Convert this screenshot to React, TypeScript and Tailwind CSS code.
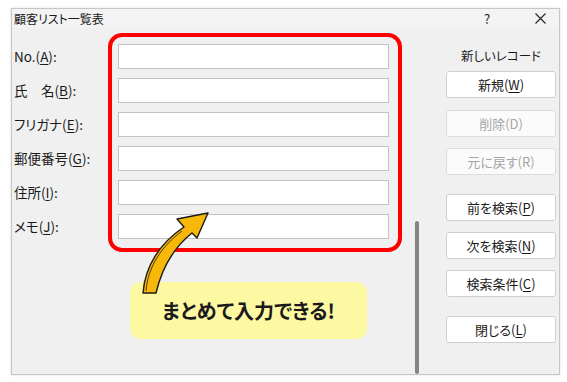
import React from "react";

const font = "[font-family:'Noto_Sans_CJK_JP','Noto_Sans',sans-serif] [font-feature-settings:'palt']";

function Acc({ pre, k, post = ")" }: { pre: string; k: string; post?: string }) {
  return (
    <span>
      {pre}(<span className="underline underline-offset-2">{k}</span>{post}
    </span>
  );
}

const labels: { pre: string; k: string }[] = [
  { pre: "No.", k: "A" },
  { pre: "氏\u3000名", k: "B" },
  { pre: "フリガナ", k: "E" },
  { pre: "郵便番号", k: "G" },
  { pre: "住所", k: "I" },
  { pre: "メモ", k: "J" },
];

function Btn({ children, disabled, className = "" }: { children: React.ReactNode; disabled?: boolean; className?: string }) {
  return (
    <div
      className={`h-[27px] w-[110px] rounded-[3px] border flex items-center justify-center text-[13px] ${
        disabled ? "border-[#dcdcdc] bg-[#fbfbfb] text-[#a6a6a6]" : "border-[#cfcfcf] bg-white text-[#1a1a1a]"
      } ${className}`}
    >
      {children}
    </div>
  );
}

export default function App() {
  return (
    <div className={`relative w-[567px] h-[382px] bg-white pt-[8px] pl-[11px] ${font}`}>
      <div className="w-[549px] h-[367px] border border-[#c6c6c6] bg-[#f0f0f0] shadow-[0_0_3px_rgba(0,0,0,0.12)] flex flex-col">
        {/* title bar */}
        <div className="h-[19px] flex items-center pl-[2px] text-[12px] text-[#1a1a1a] bg-[#f3f3f3]">
          <span>顧客リスト一覧表</span>
          <div className="ml-auto w-[20px] text-center text-[13px]">?</div>
          <div className="ml-[33px] w-[20px] mr-[9px] flex items-center justify-center">
            <svg width="11" height="11" viewBox="0 0 11 11">
              <path d="M0.5 0.5 L10.5 10.5 M10.5 0.5 L0.5 10.5" stroke="#222" strokeWidth="1.1" />
            </svg>
          </div>
        </div>
        {/* body */}
        <div className="flex items-start flex-1">
          <div className="w-[96px] pl-[2px] pt-[16px] flex flex-col gap-[9px] text-[13.5px] text-[#1a1a1a]">
            {labels.map((l) => (
              <div key={l.k} className="h-[25px] flex items-center">
                <Acc pre={l.pre} k={l.k} post="):" />
              </div>
            ))}
          </div>
          <div className="mt-[5px] w-[294px] border-4 border-[#ff0000] rounded-[14px] pl-[6px] pr-[9px] pt-[7px] pb-[9px] flex flex-col gap-[9px]">
            {labels.map((l) => (
              <div key={l.k} className="h-[25px] bg-white border border-[#c3c3c3]" />
            ))}
          </div>
          <div className="ml-[13px] mt-[193px] h-[153px] w-[4px] rounded-[2px] bg-[#858585]" />
          <div className="ml-[27px] w-[110px] flex flex-col">
            <div className="mt-[19px] h-[18px] text-[12.5px] text-center text-[#1a1a1a] leading-[18px]">新しいレコード</div>
            <Btn className="mt-[6px]"><Acc pre="新規" k="W" /></Btn>
            <Btn className="mt-[12px]" disabled>削除(D)</Btn>
            <Btn className="mt-[11px]" disabled>元に戻す(R)</Btn>
            <Btn className="mt-[19px]"><Acc pre="前を検索" k="P" /></Btn>
            <Btn className="mt-[11px]"><Acc pre="次を検索" k="N" /></Btn>
            <Btn className="mt-[11px]"><Acc pre="検索条件" k="C" /></Btn>
            <Btn className="mt-[19px]"><Acc pre="閉じる" k="L" /></Btn>
          </div>
        </div>
      </div>

      {/* callout */}
      <div className="absolute left-[130px] top-[282px] w-[237px] h-[57px] rounded-[10px] bg-[#fdf9a2] flex items-center justify-center text-[20px] font-bold text-[#1a1a1a] pt-[1px]">
        まとめて入力できる!
      </div>
      {/* arrow */}
      <svg className="absolute left-0 top-0 pointer-events-none" width="567" height="382" viewBox="0 0 567 382">
        <path
          d="M143 293 C145 266 160 243 184 227 L177 219 L208 213 L197 238 L192 233 C173 248 162 268 156 293 Z"
          fill="#f7b80a"
          stroke="#1a1a1a"
          strokeWidth="1.4"
          strokeLinejoin="round"
        />
        <path d="M146 291 C148 266 162 246 182 231" fill="none" stroke="#1a1a1a" strokeWidth="0.8" />
      </svg>
    </div>
  );
}
